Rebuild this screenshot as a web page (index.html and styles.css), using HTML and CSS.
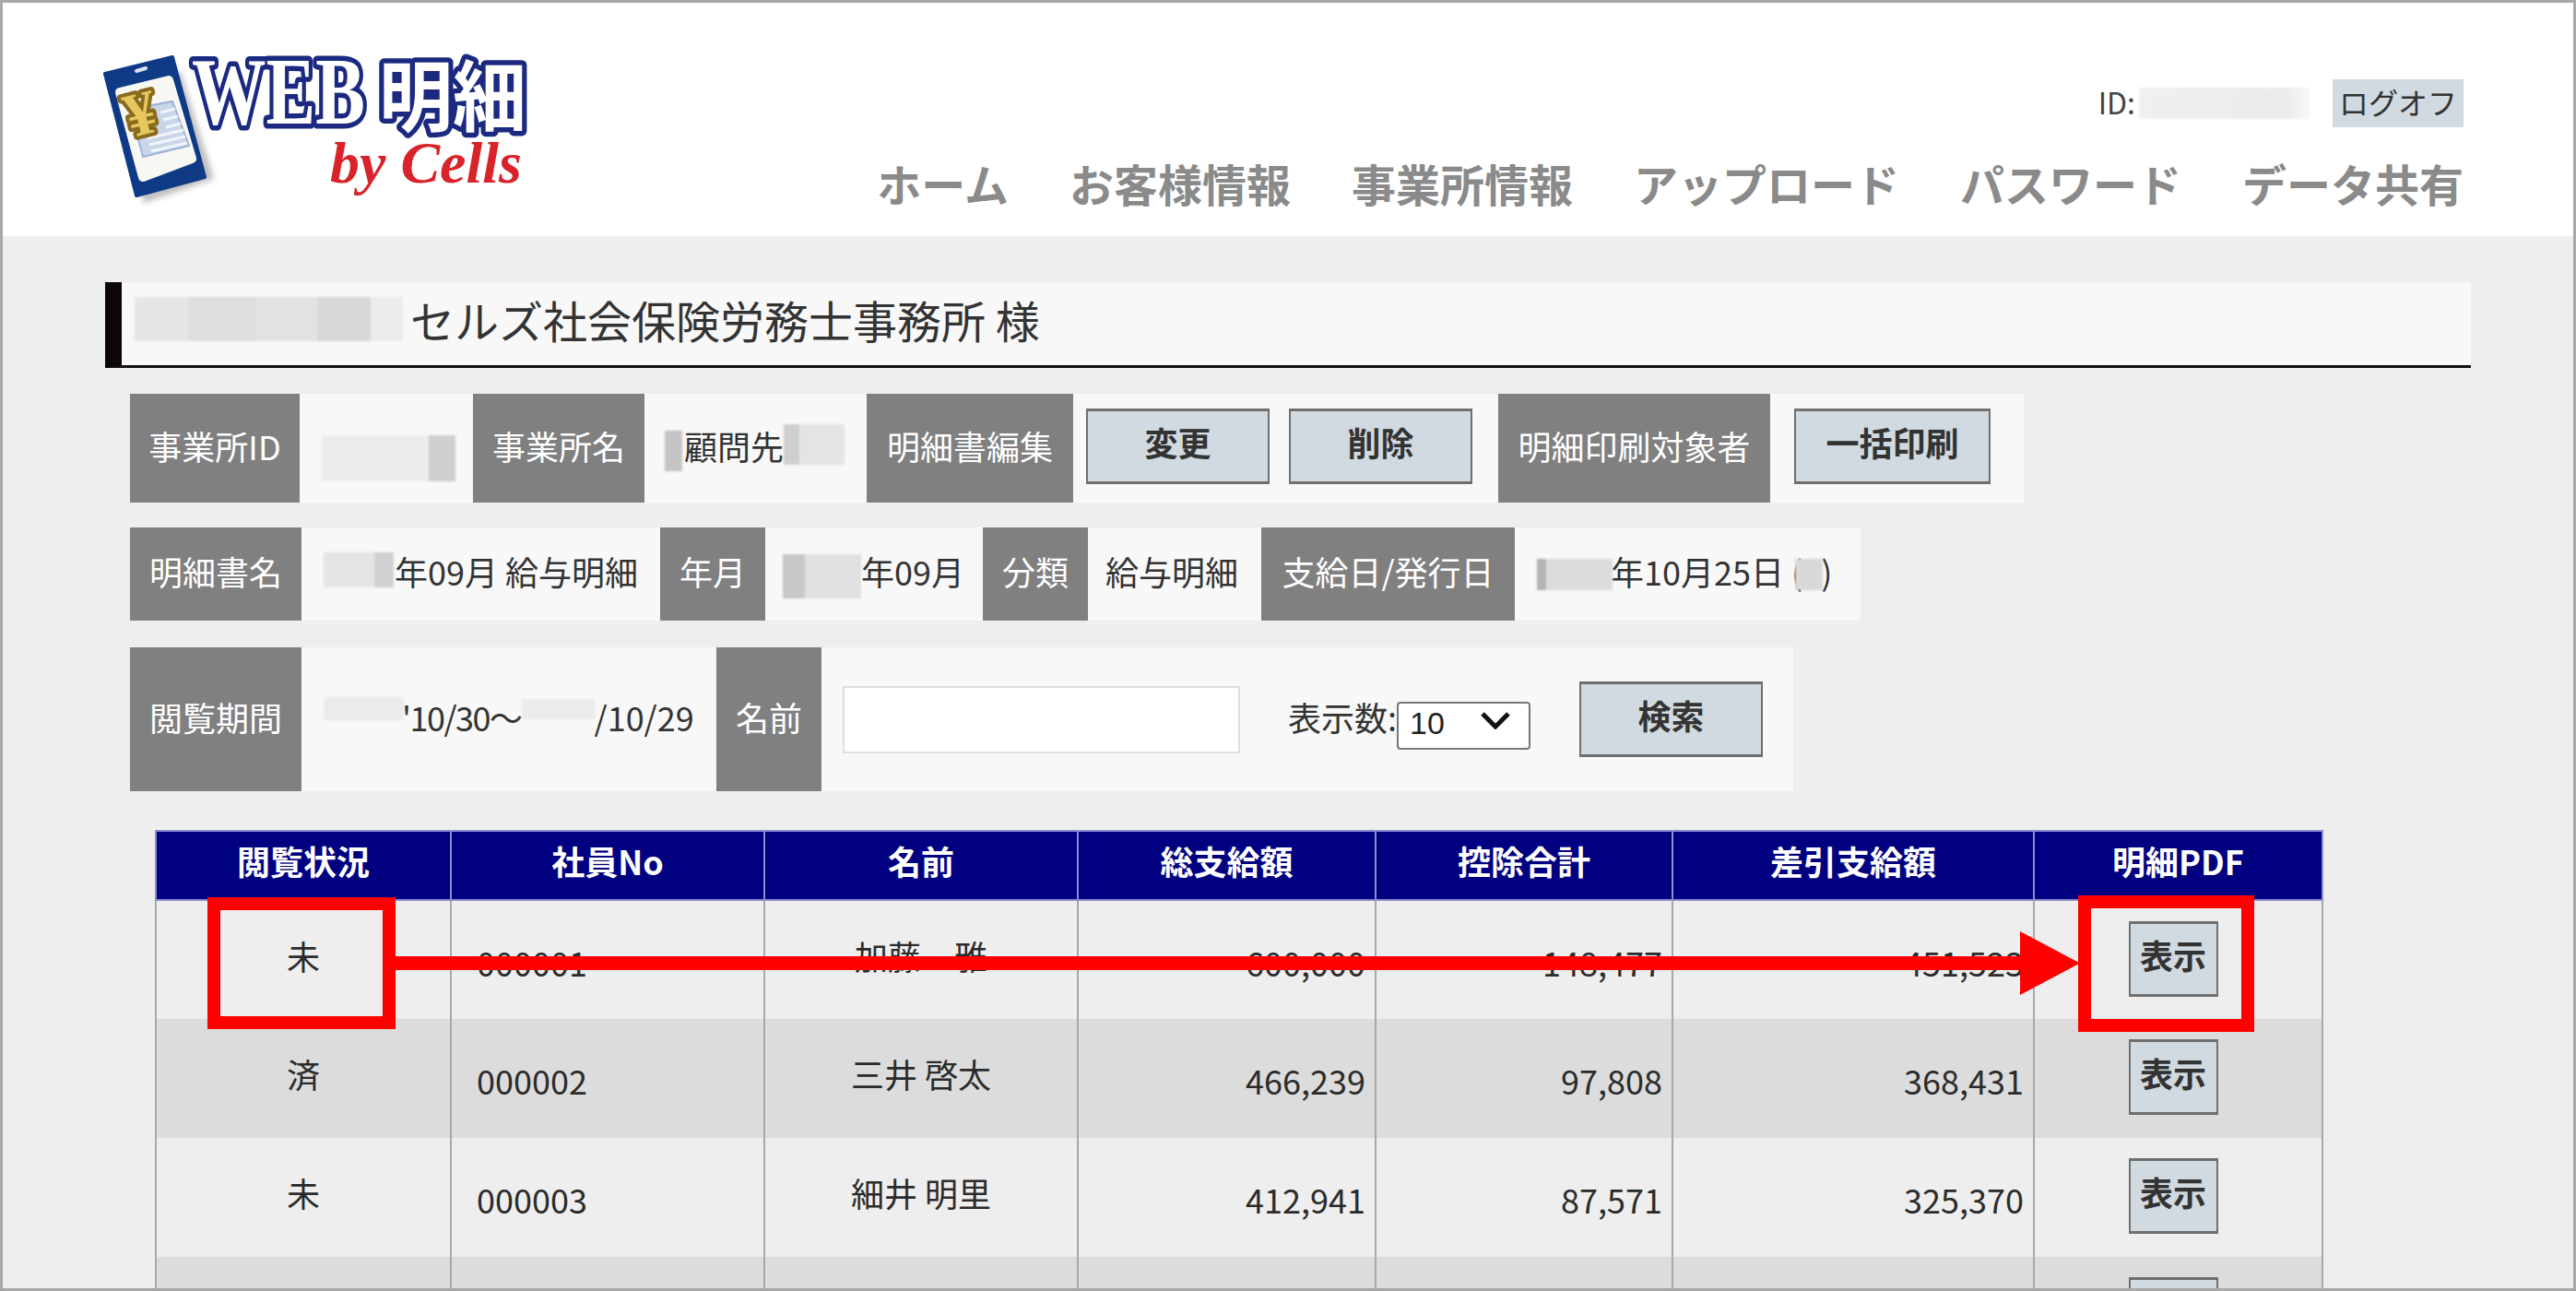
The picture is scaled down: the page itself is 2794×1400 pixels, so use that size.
FILE: index.html
```html
<!DOCTYPE html>
<html lang="ja">
<head>
<meta charset="utf-8">
<title>WEB明細 by Cells</title>
<link rel="stylesheet" href="styles.css">
</head>
<body>
<div class="frame">
  <header class="site-header">
    <svg class="logo" width="490" height="180" viewBox="100 50 490 180" role="img" aria-label="WEB明細 by Cells">
      <polygon class="logo-shadow" points="125,100 196,78 232,194 156,220"/>
      <polygon class="phone-body" points="114,80 187,62 222,192 148,212"/>
      <polygon class="phone-screen" points="130,100 183,87 208,172 155,192"/>
      <line class="phone-speaker" x1="148" y1="77" x2="158" y2="74"/>
      <polygon class="doc" points="165,114 187,110 205,158 155,170 145,132"/>
      <g class="doc-lines">
        <line x1="174" y1="122" x2="190" y2="118"/>
        <line x1="177" y1="130" x2="193" y2="126"/>
        <line x1="180" y1="138" x2="196" y2="134"/>
        <line x1="160" y1="150" x2="199" y2="141"/>
        <line x1="162" y1="157" x2="201" y2="148"/>
        <line x1="164" y1="164" x2="203" y2="155"/>
      </g>
      <text class="yen" x="153" y="146" transform="rotate(-14 153 125)" text-anchor="middle">¥</text>
      <text class="logo-web" x="208" y="134" textLength="188" lengthAdjust="spacingAndGlyphs">WEB</text>
      <text class="logo-meisai" x="411" y="136" textLength="160" lengthAdjust="spacingAndGlyphs">明細</text>
      <text class="logo-cells" x="358" y="198">by Cells</text>
    </svg>
    <div class="header-right">
      <div class="user-line">
        <span class="user-id">ID:</span>
        <span class="blur blur-user"></span>
        <a class="logoff">ログオフ</a>
      </div>
      <nav class="main-nav">
        <a>ホーム</a>
        <a>お客様情報</a>
        <a>事業所情報</a>
        <a>アップロード</a>
        <a>パスワード</a>
        <a>データ共有</a>
      </nav>
    </div>
  </header>

  <main class="content">
    <h1 class="page-title"><span class="blur blur-title"></span><span>セルズ社会保険労務士事務所 様</span></h1>

    <div class="info-row row-a">
      <div class="label">事業所ID</div>
      <div class="value"><span class="blur blur-id"></span></div>
      <div class="label">事業所名</div>
      <div class="value value-name"><span class="blur blur-name-l"></span><span>顧問先</span><span class="blur blur-name-r"></span></div>
      <div class="label">明細書編集</div>
      <div class="actions"><button class="btn btn-wide">変更</button><button class="btn btn-wide">削除</button></div>
      <div class="label">明細印刷対象者</div>
      <div class="actions actions-print"><button class="btn btn-print">一括印刷</button></div>
    </div>

    <div class="info-row row-b">
      <div class="label">明細書名</div>
      <div class="value"><span class="blur blur-y1"></span><span>年09月 給与明細</span></div>
      <div class="label">年月</div>
      <div class="value value-tight"><span class="blur blur-y2"></span><span>年09月</span></div>
      <div class="label">分類</div>
      <div class="value value-tight"><span>給与明細</span></div>
      <div class="label">支給日/発行日</div>
      <div class="value"><span class="blur blur-y3"></span><span>年10月25日 (</span><span class="blur blur-day"></span><span>)</span></div>
    </div>

    <div class="info-row row-c">
      <div class="label">閲覧期間</div>
      <div class="value"><span class="blur blur-p1"></span><span class="period-start">'10/30～</span><span class="blur blur-p2"></span><span>/10/29</span></div>
      <div class="label">名前</div>
      <div class="search">
        <input class="name-input" type="text" aria-label="名前">
        <label class="count-label">表示数:</label>
        <span class="select-wrap">
          <select class="count-select" aria-label="表示数"><option>10</option></select>
          <svg class="select-chevron" width="34" height="20" viewBox="0 0 34 20"><path d="M3 3 L17 17 L31 3"/></svg>
        </span>
        <button class="btn btn-search">検索</button>
      </div>
    </div>

    <table class="slips">
      <colgroup>
        <col class="c-status"><col class="c-no"><col class="c-name"><col class="c-gross"><col class="c-deduct"><col class="c-net"><col class="c-pdf">
      </colgroup>
      <thead>
        <tr><th>閲覧状況</th><th>社員No</th><th>名前</th><th>総支給額</th><th>控除合計</th><th>差引支給額</th><th>明細PDF</th></tr>
      </thead>
      <tbody>
        <tr>
          <td class="t-status">未</td><td class="t-no">000001</td><td class="t-person">加藤　雅</td>
          <td class="t-num">600,000</td><td class="t-num">148,477</td><td class="t-num">451,523</td>
          <td class="t-pdf"><button class="btn btn-show">表示</button></td>
        </tr>
        <tr>
          <td class="t-status">済</td><td class="t-no">000002</td><td class="t-person">三井 啓太</td>
          <td class="t-num">466,239</td><td class="t-num">97,808</td><td class="t-num">368,431</td>
          <td class="t-pdf"><button class="btn btn-show">表示</button></td>
        </tr>
        <tr>
          <td class="t-status">未</td><td class="t-no">000003</td><td class="t-person">細井 明里</td>
          <td class="t-num">412,941</td><td class="t-num">87,571</td><td class="t-num">325,370</td>
          <td class="t-pdf"><button class="btn btn-show">表示</button></td>
        </tr>
        <tr>
          <td></td><td></td><td></td><td></td><td></td><td></td>
          <td class="t-pdf"><button class="btn btn-show"></button></td>
        </tr>
      </tbody>
    </table>
  </main>

  <svg class="annotation" width="2794" height="1400" viewBox="0 0 2794 1400" aria-hidden="true">
    <rect class="mark" x="232" y="980" width="190" height="129"/>
    <rect class="mark" x="2261" y="978" width="177" height="134"/>
    <rect class="arrow" x="429" y="1037" width="1765" height="15"/>
    <polygon class="arrow" points="2191,1010 2256,1044.5 2191,1079"/>
  </svg>
</div>
</body>
</html>
```

FILE: styles.css
```css
* { box-sizing: border-box; }

html, body { margin: 0; padding: 0; }

body {
  font-family: "Noto Sans CJK JP", "Noto Sans", sans-serif;
  color: #2b2b2b;
  background: #fff;
}

.frame {
  position: relative;
  width: 2794px;
  height: 1400px;
  overflow: hidden;
  background: #eeeeee;
  border: 3px solid #a8a8a8;
}

/* Header */
.site-header {
  display: flex;
  justify-content: space-between;
  height: 253px;
  padding: 47px 119px 0 97px;
  background: #fff;
}

.logo { display: block; overflow: visible; filter: blur(0.6px); }
.logo-shadow { fill: #888; opacity: 0.55; filter: blur(3px); }
.phone-body { fill: #0f3a86; stroke: #0f3a86; stroke-width: 4; stroke-linejoin: round; }
.phone-screen { fill: #f7f8f4; stroke: #f7f8f4; stroke-width: 10; stroke-linejoin: round; }
.phone-speaker { stroke: #dfe6f0; stroke-width: 4; stroke-linecap: round; }
.doc { fill: #c9d6ea; stroke: #9db2d6; stroke-width: 2; }
.doc-lines line { stroke: #f2f5fa; stroke-width: 3; }
.yen {
  font: 700 68px "Liberation Serif", serif;
  fill: #e6c75e;
  stroke: #8a6a1c;
  stroke-width: 8;
  paint-order: stroke;
  stroke-linejoin: round;
}
.logo-web, .logo-meisai {
  fill: #fff;
  stroke: #1b2a80;
  stroke-width: 11;
  paint-order: stroke;
  stroke-linejoin: round;
}
.logo-web { font: 700 104px "Liberation Serif", serif; }
.logo-meisai { font: 700 84px "Noto Sans CJK JP", sans-serif; }
.logo-cells { font: italic 700 64px "Liberation Serif", serif; fill: #d8232a; }

.header-right {
  display: flex;
  flex-direction: column;
  align-items: flex-end;
  padding-top: 36px;
}

.user-line { display: flex; align-items: center; height: 52px; font-size: 32px; }
.user-id { margin-right: 4px; padding-bottom: 4px; color: #444; }
.logoff {
  display: flex;
  align-items: center;
  justify-content: center;
  width: 142px;
  height: 52px;
  margin-left: 25px;
  padding-bottom: 4px;
  background: #d0dae0;
  color: #333;
  font-size: 32px;
}

.main-nav {
  display: flex;
  gap: 66px;
  margin-top: 32px;
  font-size: 48px;
  font-weight: 700;
  line-height: 56px;
  color: #8a8a8a;
}

/* Blurred-out personal data */
.blur { display: block; flex: none; background: #e4e4e4; filter: blur(1px); }
.blur-user { width: 185px; height: 34px; background: linear-gradient(90deg, #f0f0f0, #ebebeb 85%, #f8f8f8); }
.blur-title {
  width: 291px;
  height: 48px;
  margin-right: 8px;
  background: linear-gradient(90deg, #e6e6e6 0 20%, #dedede 20% 45%, #e2e2e2 45% 68%, #d8d8d8 68% 88%, #ececec 88%);
}
.blur-id {
  width: 145px;
  height: 50px;
  margin-top: 29px;
  background: linear-gradient(90deg, #ececec 0 80%, #cfcfcf 80%);
}
.blur-name-l { width: 19px; height: 44px; margin-right: 2px; margin-top: 13px; background: #c4c4c4; }
.blur-name-r {
  width: 66px;
  height: 44px;
  margin-top: -1px;
  background: linear-gradient(90deg, #cfcfcf 0 26%, #e4e4e4 26%);
}
.blur-y1 {
  width: 76px;
  height: 38px;
  margin-top: -3px;
  margin-right: 1px;
  background: linear-gradient(90deg, #e4e4e4 0 72%, #d0d0d0 72%);
}
.blur-y2 {
  width: 85px;
  height: 48px;
  margin-top: 11px;
  background: linear-gradient(90deg, #c8c8c8 0 28%, #e0e0e0 28%);
}
.blur-y3 {
  width: 82px;
  height: 34px;
  margin-top: 7px;
  margin-right: -2px;
  background: linear-gradient(90deg, #b4b4b4 0 12%, #dcdcdc 12%);
}
.blur-day { width: 30px; height: 34px; margin-top: 7px; margin-left: -8px; margin-right: -2px; background: #d8d8d8; }
.blur-p1 { width: 87px; height: 25px; margin-top: -17px; margin-right: -2px; background: #ebebeb; }
.blur-p2 { width: 79px; height: 22px; margin-top: -15px; background: #ebebeb; }
.period-start { letter-spacing: -1.5px; }

/* Content */
.content { padding: 50px 0 0 111px; }

.page-title {
  display: flex;
  align-items: center;
  width: 2566px;
  height: 93px;
  margin: 0 0 28px;
  padding: 0 0 11px 14px;
  background: #f8f8f8;
  border-left: 18px solid #0d0606;
  border-bottom: 3px solid #111;
  font-size: 48px;
  font-weight: 400;
  line-height: 1;
  color: #333;
}

.info-row {
  display: grid;
  width: fit-content;
  margin: 0 0 0 27px;
  background: #f8f8f8;
  font-size: 36px;
}

.row-a { grid-template-columns: 184px 188px 186px 241px 224px 461px 295px 275px; height: 118px; margin-bottom: 27px; }
.row-b { grid-template-columns: 186px 389px 114px 236px 114px 188px 275px 375px; height: 101px; margin-bottom: 29px; }
.row-c { grid-template-columns: 186px 450px 114px 1054px; height: 156px; margin-bottom: 42px; }

.label {
  display: flex;
  align-items: center;
  justify-content: center;
  padding-bottom: 7px;
  background: #808080;
  color: #fff;
  white-space: nowrap;
}

.value {
  display: flex;
  align-items: center;
  padding: 0 0 7px 24px;
  white-space: nowrap;
  color: #333;
}
.value-name { padding-left: 22px; }
.value-tight { padding-left: 19px; }

.actions { display: flex; align-items: flex-start; gap: 21px; padding: 16px 0 0 14px; }
.actions-print { padding-left: 26px; }

.btn {
  display: block;
  height: 82px;
  padding: 0 0 10px;
  background: #d0dae0;
  border: 2px solid #6f6f6f;
  border-top-width: 3px;
  border-bottom-width: 3px;
  font-family: inherit;
  font-size: 36px;
  font-weight: 700;
  line-height: 1;
  color: #333;
}
.btn-wide { width: 199px; }
.btn-print { width: 213px; }
.btn-search { width: 199px; margin-left: 53px; }
.btn-show { width: 97px; margin: 0 auto 3px; }

.search { display: flex; align-items: center; padding-left: 23px; }

.name-input {
  width: 431px;
  height: 73px;
  background: #fff;
  border: 2px solid #dedede;
}

.count-label { width: 118px; margin-left: 52px; padding-bottom: 7px; white-space: nowrap; overflow: hidden; color: #333; }

.select-wrap { position: relative; display: block; width: 145px; height: 52px; }
.count-select {
  width: 100%;
  height: 100%;
  padding: 0 0 5px 12px;
  appearance: none;
  background: #fff;
  border: 2px solid #777;
  border-radius: 4px;
  font-family: "Liberation Sans", sans-serif;
  font-size: 34px;
  color: #222;
}
.select-chevron { position: absolute; top: 17px; right: 21px; pointer-events: none; }
.select-chevron path { fill: none; stroke: #111; stroke-width: 5; }

/* Table */
.slips {
  width: 2350px;
  margin-left: 54px;
  border-collapse: collapse;
  table-layout: fixed;
  font-size: 36px;
}
.c-status { width: 320px; }
.c-no { width: 340px; }
.c-name { width: 340px; }
.c-gross { width: 323px; }
.c-deduct { width: 322px; }
.c-net { width: 392px; }
.c-pdf { width: 313px; }

.slips th {
  height: 75px;
  padding: 0 0 11px;
  background: #000080;
  border: 2px solid #8d8dd0;
  font-weight: 700;
  line-height: 1;
  color: #fff;
}
.slips td {
  height: 129px;
  padding: 0;
  border-left: 2px solid #a8a8a8;
  border-right: 2px solid #a8a8a8;
  line-height: 1;
  color: #2b2b2b;
}
.slips tbody tr:nth-child(odd) td { background: #eeeeee; }
.slips tbody tr:nth-child(even) td { background: #dcdcdc; }

.slips .t-status { padding-bottom: 11px; text-align: center; }
.slips .t-person { padding-bottom: 11px; text-align: center; }
.slips .t-no { padding: 3px 0 0 27px; }
.slips .t-num { padding: 3px 10px 0 0; text-align: right; }
.slips .t-pdf { padding-right: 11px; text-align: center; }

/* Annotation drawn on top of the screenshot */
.annotation { position: absolute; top: -3px; left: -3px; pointer-events: none; }
.mark { fill: none; stroke: #ff0000; stroke-width: 14; }
.arrow { fill: #ff0000; }
```
